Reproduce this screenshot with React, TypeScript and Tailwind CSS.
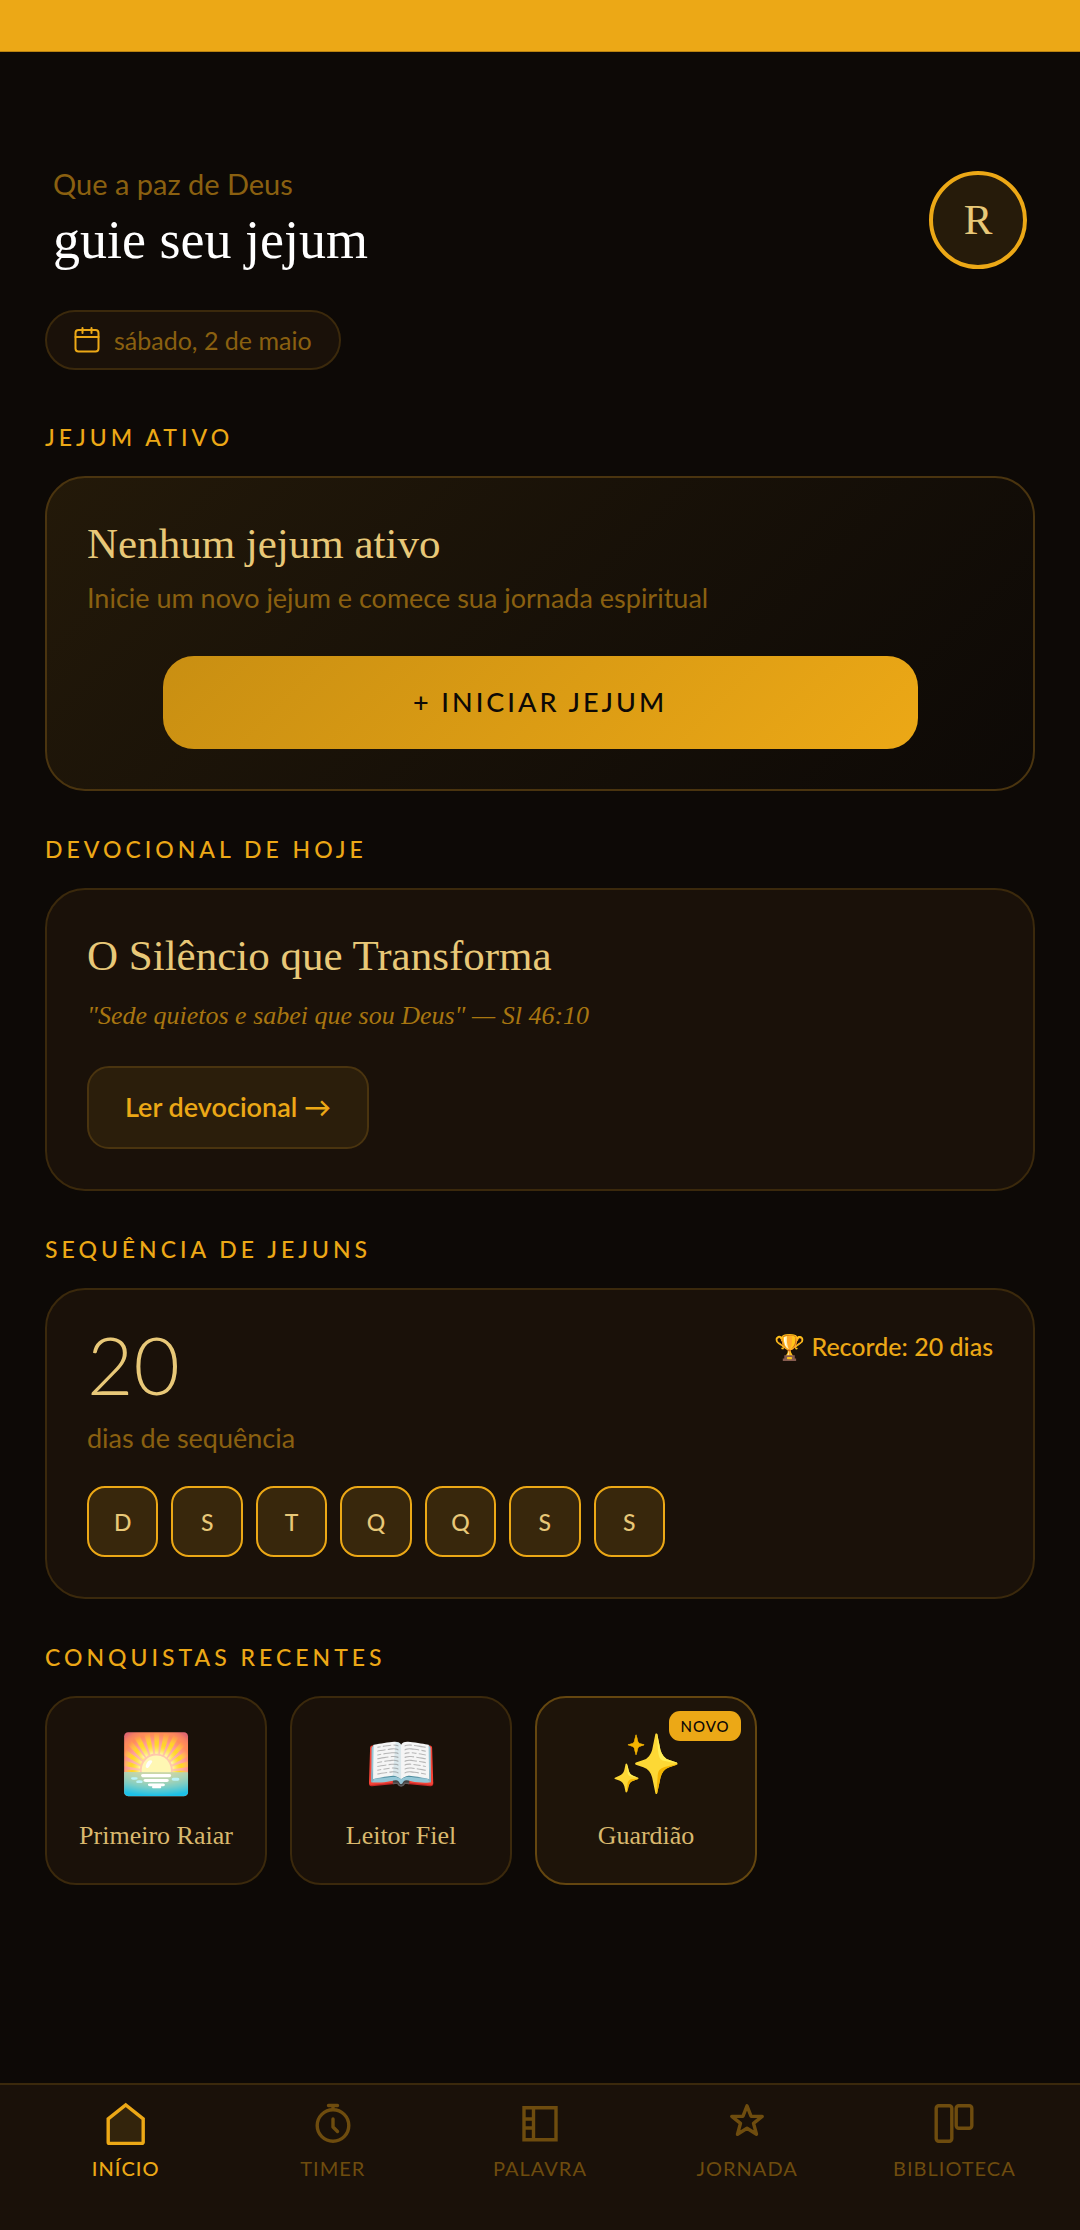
/**
 * Home screen of the fasting journal: greeting, active fast, daily devotional,
 * streak, recent achievements and the bottom tab bar.
 */
import React from "react";

const DAYS = ["D", "S", "T", "Q", "Q", "S", "S"];

const ACHIEVEMENTS = [
  { label: "Primeiro Raiar", icon: "🌅", isNew: false },
  { label: "Leitor Fiel", icon: "📖", isNew: false },
  { label: "Guardião", icon: "✨", isNew: true },
];

const SERIF = "font-['Liberation_Serif',serif]";

function CalendarIcon() {
  return (
    <svg viewBox="0 0 26 26" className="h-[26px] w-[26px]" fill="none" stroke="#eca816" strokeWidth="2" strokeLinecap="round">
      <rect x="1.5" y="3" width="23" height="21.5" rx="3" />
      <path d="M1.5 10h23M8.5 1v5M17.500 1v5" />
    </svg>
  );
}

function TabIcon({ name }: { name: string }) {
  return (
    <svg viewBox="0 0 44 44" className="h-11 w-11" fill="none" stroke="currentColor" strokeWidth="3.4" strokeLinejoin="round" strokeLinecap="round">
      {name === "home" && (
        <path d="M4.2 16.8 21.700 3l17.500 13.800v23.400a1.200 1.200 0 0 1-1.200 1.200H5.400a1.200 1.200 0 0 1-1.200-1.200Z" fill="#33240c" strokeLinejoin="miter" />
      )}
      {name === "timer" && (
        <>
          <circle cx="22" cy="23.5" r="15.8" />
          <path d="M17.5 3.5h9M22 3.5v3M22 17v8l4.5 4.5" />
        </>
      )}
      {name === "book" && (
        <path d="M6 5.7h32v32H6ZM15.5 5.7v32M6 17h9.5M6 26h9.5" strokeLinejoin="miter" strokeLinecap="butt" />
      )}
      {name === "star" && (
        <path d="m22 3.8 4 10.4 11.2.2-8.7 6.9 3 11L22 26.2l-9.5 6.1 3-11-8.7-6.9 11.2-.2Z" />
      )}
      {name === "library" && (
        <>
          <rect x="4.2" y="3.7" width="15.6" height="35.6" rx="2.5" />
          <rect x="24.2" y="3.7" width="15.6" height="22.6" rx="2.5" />
        </>
      )}
    </svg>
  );
}

const TABS = [
  { label: "INÍCIO", icon: "home" },
  { label: "TIMER", icon: "timer" },
  { label: "PALAVRA", icon: "book" },
  { label: "JORNADA", icon: "star" },
  { label: "BIBLIOTECA", icon: "library" },
];

function SectionTitle({ children }: { children: React.ReactNode }) {
  return <h2 className="mt-11 mb-[25px] text-[23px] leading-7 font-medium tracking-[4px] text-[#eca816]">{children}</h2>;
}

export default function App() {
  return (
    <div className="flex min-h-screen flex-col bg-[#0d0906] font-['Lato',sans-serif]">
      <div className="h-13 border-b border-[#b98210] bg-[#eca816]" />

      <main className="flex-1 px-[45px] pt-28 pb-12">
        <header className="flex items-center justify-between px-2">
          <div>
            <p className="text-[29px] leading-10 text-[#8a6010]">Que a paz de Deus</p>
            <h1 className={`${SERIF} text-[54px] leading-[72px] text-white`}>guie seu jejum</h1>
          </div>
          <button
            aria-label="Perfil"
            className={`${SERIF} flex h-[98px] w-[98px] items-center justify-center rounded-full border-4 border-[#eca816] bg-[#261b0a] text-[43px] text-[#e8c878]`}
          >
            R
          </button>
        </header>

        <div className="mt-[34px] mb-[53px] flex h-[60px] w-fit items-center gap-[14px] rounded-full border-2 border-[#3b290c] bg-[#1a1109] px-[27px]">
          <CalendarIcon />
          <span className="text-[25px] leading-8 text-[#8a6010]">sábado, 2 de maio</span>
        </div>

        <SectionTitle>JEJUM ATIVO</SectionTitle>
        <section className="rounded-[40px] border-2 border-[#4a340f] bg-linear-135 from-[#231909] to-[#0d0906] p-10">
          <h3 className={`${SERIF} text-[43px] leading-[52px] text-[#e8c878]`}>Nenhum jejum ativo</h3>
          <p className="mt-2 text-[27px] leading-10 text-[#8a6010]">Inicie um novo jejum e comece sua jornada espiritual</p>
          <button className="mx-auto mt-[38px] block h-[93px] w-5/6 rounded-[31px] bg-linear-135 from-[#c98f12] to-[#eca816] text-[27px] font-medium tracking-[3px] text-[#0d0906]">
            + INICIAR JEJUM
          </button>
        </section>

        <SectionTitle>DEVOCIONAL DE HOJE</SectionTitle>
        <section className="rounded-[40px] border-2 border-[#3b290c] bg-[#1a1109] p-10">
          <h3 className={`${SERIF} text-[43px] leading-[52px] text-[#e8c878]`}>O Silêncio que Transforma</h3>
          <p className={`${SERIF} mt-2 text-[26px] leading-[52px] text-[#a87610] italic`}>"Sede quietos e sabei que sou Deus" — Sl 46:10</p>
          <button className="mt-6 block h-[83px] rounded-[22px] border-2 border-[#4a340f] bg-[#2b1e0b] px-9 text-[27px] font-semibold text-[#eca816]">
            Ler devocional →
          </button>
        </section>

        <SectionTitle>SEQUÊNCIA DE JEJUNS</SectionTitle>
        <section className="rounded-[40px] border-2 border-[#3b290c] bg-[#1a1109] p-10">
          <div className="flex items-start justify-between">
            <div>
              <div className="text-[80px] leading-[68px] font-light text-[#e8c878]">20</div>
              <p className="mt-5 text-[27px] leading-10 text-[#8a6010]">dias de sequência</p>
            </div>
            <p className="text-[25px] leading-8 font-medium text-[#eca816]">🏆 Recorde: 20 dias</p>
          </div>
          <ul className="mt-7 grid w-[578px] grid-cols-7 gap-[13px]">
            {DAYS.map((day, i) => (
              <li key={i} className="flex h-[71px] items-center justify-center rounded-[18px] border-2 border-[#eca816] bg-[#38270c] text-[23px] leading-7 font-medium text-[#e8c878]">
                {day}
              </li>
            ))}
          </ul>
        </section>

        <SectionTitle>CONQUISTAS RECENTES</SectionTitle>
        <ul className="flex gap-[23px]">
          {ACHIEVEMENTS.map((a) => (
            <li
              key={a.label}
              className={`relative flex h-[189px] w-[222px] flex-col items-center rounded-[31px] border-2 pt-7 ${
                a.isNew ? "border-[#64460f] bg-[#1e1409]" : "border-[#3b290c] bg-[#1a1109]"
              }`}
            >
              <span className="text-[58px] leading-[72px]">{a.icon}</span>
              <span className={`${SERIF} mt-[18px] text-[26px] leading-10 text-[#d9b96e]`}>{a.label}</span>
              {a.isNew && (
                <span className="absolute top-[13px] right-[14px] flex h-[30px] w-[72px] items-center justify-center rounded-[11px] bg-[#eca816] text-[15px] font-medium tracking-[1px] text-[#0d0906]">
                  NOVO
                </span>
              )}
            </li>
          ))}
        </ul>
      </main>

      <nav className="grid grid-cols-5 border-t-2 border-[#3b290c] bg-[#1a1109] px-[22px] pt-[17px] pb-12">
        {TABS.map((tab, i) => (
          <a key={tab.label} href="#" className={`flex flex-col items-center gap-2 ${i === 0 ? "font-medium text-[#eca816]" : "text-[#6e4c0e]"}`}>
            <TabIcon name={tab.icon} />
            <span className="text-xl leading-7 tracking-[1px]">{tab.label}</span>
          </a>
        ))}
      </nav>
    </div>
  );
}
